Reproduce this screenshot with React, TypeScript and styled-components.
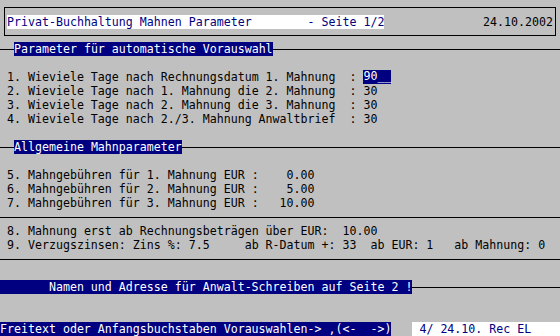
import React from "react";
import styled, { createGlobalStyle } from "styled-components";

const GlobalStyle = createGlobalStyle`
  html, body {
    margin: 0;
    padding: 0;
    background: #c0c0c0;
  }
  #root {
    width: 560px;
    height: 336px;
  }
`;

const NAVY = "#000080";

const Screen = styled.div`
  width: 560px;
  height: 336px;
  background: #c0c0c0;
  color: #000;
  font-family: "DejaVu Sans Mono", "Liberation Mono", monospace;
  font-size: 11.627px;
  line-height: 14px;
  display: flex;
  flex-direction: column;
  overflow: hidden;
  white-space: pre;
`;

const HeaderBox = styled.header`
  box-sizing: border-box;
  margin: 7px 4px 6px 4px;
  height: 29px;
  border: 1px solid #000;
  padding: 0 2px;
  display: flex;
  align-items: center;
  justify-content: space-between;
`;

const Title = styled.span`
  display: inline-block;
  height: 14px;
  background: #fff;
  color: ${NAVY};
`;

const DateText = styled.span`
  color: #000;
`;

const Row = styled.div`
  height: 14px;
  display: flex;
  align-items: center;
  flex-shrink: 0;
`;

const TextRow = styled(Row)`
  padding-left: 7px;
`;

const Blank = styled.div<{ $rows?: number }>`
  height: ${(p) => (p.$rows ?? 1) * 14}px;
  flex-shrink: 0;
`;

const Rule = styled.div<{ $w?: number }>`
  height: 1px;
  background: #000;
  ${(p) => (p.$w ? `width: ${p.$w}px; flex: none;` : "flex: 1;")}
`;

const Label = styled.span`
  display: inline-block;
  height: 14px;
  background: ${NAVY};
  color: #fff;
`;

const Field = styled.span`
  display: inline-block;
  box-sizing: border-box;
  height: 14px;
  line-height: 12px;
  background: ${NAVY};
  color: #fff;
`;

const Gap = styled.span<{ $cols: number }>`
  display: inline-block;
  width: ${(p) => p.$cols * 7}px;
`;

const StatusInfo = styled.span`
  flex: 1;
  height: 14px;
  background: #fff;
  color: ${NAVY};
`;

const waitRows = [
  ["1. Wieviele Tage nach Rechnungsdatum 1. Mahnung  : ", "90__", true],
  ["2. Wieviele Tage nach 1. Mahnung die 2. Mahnung  : ", "30", false],
  ["3. Wieviele Tage nach 2. Mahnung die 3. Mahnung  : ", "30", false],
  ["4. Wieviele Tage nach 2./3. Mahnung Anwaltbrief  : ", "30", false],
] as const;

const feeRows = [
  "5. Mahngebühren für 1. Mahnung EUR :    0.00",
  "6. Mahngebühren für 2. Mahnung EUR :    5.00",
  "7. Mahngebühren für 3. Mahnung EUR :   10.00",
];

export default function App() {
  return (
    <>
      <GlobalStyle />
      <Screen>
        <HeaderBox>
          <Title>Privat-Buchhaltung Mahnen Parameter        - Seite 1/2</Title>
          <DateText>24.10.2002</DateText>
        </HeaderBox>

        <Row>
          <Rule $w={14} />
          <Label>Parameter für automatische Vorauswahl</Label>
          <Rule />
        </Row>
        <Blank />
        {waitRows.map(([text, value, active]) => (
          <TextRow key={text}>
            {text}
            {active ? <Field>{value}</Field> : value}
          </TextRow>
        ))}
        <Blank />

        <Row>
          <Rule $w={14} />
          <Label>Allgemeine Mahnparameter</Label>
          <Rule />
        </Row>
        <Blank />
        {feeRows.map((t) => (
          <TextRow key={t}>{t}</TextRow>
        ))}
        <Row>
          <Rule />
        </Row>
        <TextRow>8. Mahnung erst ab Rechnungsbeträgen über EUR:  10.00</TextRow>
        <TextRow>
          9. Verzugszinsen: Zins %: 7.5     ab R-Datum +: 33  ab EUR: 1   ab Mahnung: 0
        </TextRow>
        <Row>
          <Rule />
        </Row>
        <Blank />

        <Row>
          <Label>       Namen und Adresse für Anwalt-Schreiben auf Seite 2 !</Label>
          <Rule />
        </Row>
        <Blank $rows={2} />

        <Row>
          <Label>Freitext oder Anfangsbuchstaben Vorauswahlen-&gt; ,(&lt;-  -&gt;)</Label>
          <Gap $cols={3} />
          <StatusInfo> 4/ 24.10. Rec EL</StatusInfo>
        </Row>
      </Screen>
    </>
  );
}
